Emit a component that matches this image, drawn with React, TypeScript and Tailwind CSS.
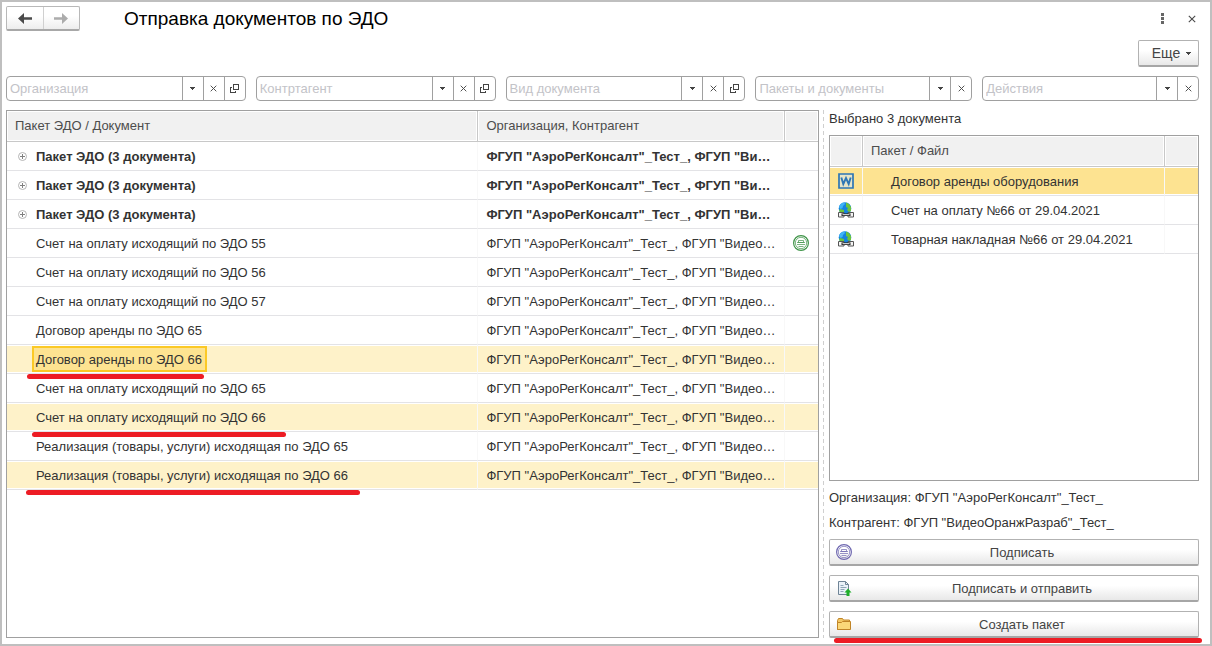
import type { ReactNode } from 'react';

const ORG = 'ФГУП "АэроРегКонсалт"_Тест_';
const PARTNER = 'ФГУП "ВидеоОранжРазраб"_Тест_';

type Row = {
  title: string;
  group?: boolean;
  signed?: boolean;
  selected?: boolean;
  current?: boolean;
  mark?: string;
};

const rows: Row[] = [
  { title: 'Пакет ЭДО (3 документа)', group: true },
  { title: 'Пакет ЭДО (3 документа)', group: true },
  { title: 'Пакет ЭДО (3 документа)', group: true },
  { title: 'Счет на оплату исходящий по ЭДО 55', signed: true },
  { title: 'Счет на оплату исходящий по ЭДО 56' },
  { title: 'Счет на оплату исходящий по ЭДО 57' },
  { title: 'Договор аренды по ЭДО 65' },
  { title: 'Договор аренды по ЭДО 66', selected: true, current: true, mark: 'left-5 w-[177px]' },
  { title: 'Счет на оплату исходящий по ЭДО 65' },
  { title: 'Счет на оплату исходящий по ЭДО 66', selected: true, mark: 'left-[25px] w-[254px]' },
  { title: 'Реализация (товары, услуги) исходящая по ЭДО 65' },
  { title: 'Реализация (товары, услуги) исходящая по ЭДО 66', selected: true, mark: 'left-[19px] w-[334px]' },
];

const filters = [
  { label: 'Организация', open: true },
  { label: 'Контртагент', open: true },
  { label: 'Вид документа', open: true },
  { label: 'Пакеты и документы', open: false },
  { label: 'Действия', open: false },
];

const files = [
  { name: 'Договор аренды оборудования', word: true },
  { name: 'Счет на оплату №66 от 29.04.2021', word: false },
  { name: 'Товарная накладная №66 от 29.04.2021', word: false },
];

function Caret() {
  return (
    <svg width="5" height="3" viewBox="0 0 5 3" fill="#444" shapeRendering="crispEdges">
      <path d="M0 0h5v1H4v1H3v1H2V2H1V1H0z" />
    </svg>
  );
}

function Cross({ size }: { size: number }) {
  return (
    <svg width={size} height={size} viewBox="0 0 8 8" stroke="#4a4a4a" strokeWidth="1.1">
      <path d="M.8.8l6.400 6.400M7.200.8L.8 7.200" />
    </svg>
  );
}

function OpenIcon() {
  return (
    <svg width="9" height="9" viewBox="0 0 9 9" fill="none" stroke="#444" shapeRendering="crispEdges">
      <path d="M3.5 .5h5v5h-5z" />
      <path d="M2 3.5H.5v5h5V7" />
    </svg>
  );
}

function Arrow({ color, flip }: { color: string; flip?: boolean }) {
  return (
    <svg width="14" height="11" viewBox="0 0 14 11" fill={color} className={flip ? 'rotate-180' : ''}>
      <path d="M0 5.500L6 0v4.200h8v2.600H6V11z" />
    </svg>
  );
}

function Seal({ color }: { color: string }) {
  return (
    <svg width="16" height="16" viewBox="0 0 16 16" fill="none" stroke={color}>
      <circle cx="8" cy="8" r="7.400" strokeWidth="1.200" />
      <circle cx="8" cy="8" r="5.700" strokeWidth=".7" />
      <path d="M5.500 5.500h5v2h-5zM4 7.500h8M4 9.500h8M5.500 11.500h5" strokeWidth=".7" />
    </svg>
  );
}

function PlusIcon() {
  return (
    <svg width="9" height="9" viewBox="0 0 9 9" fill="none">
      <circle cx="4.500" cy="4.500" r="4" stroke="#b4b4b4" />
      <path d="M2 4.500h5M4.500 2v5" stroke="#808080" />
    </svg>
  );
}

function WordIcon() {
  return (
    <svg width="16" height="16" viewBox="0 0 16 16" fill="none" stroke="#2d76b5">
      <path d="M1 1h14v14H1z" fill="#e6e4c8" strokeWidth="1.700" />
      <path d="M3.300 4.500l2 6.500L8 5l2.700 6 2-6.500" strokeWidth="1.900" />
    </svg>
  );
}

function WebLinkIcon() {
  return (
    <svg width="16" height="16" viewBox="0 0 16 16" fill="none">
      <circle cx="7" cy="6.500" r="6.300" fill="#1583e0" />
      <path d="M1 5C2 2 4 .4 6.500.4L7 2 5 4 4.500 6 2.500 7z" fill="#3fb4f5" />
      <path d="M8 .4l3 1.600 2 3v4l-2 1-2-2 1-2-2-1zM2 7l4 1v3H3L1 9z" fill="#6cc43c" />
      <path d="M.5 10.500h5.500v4.500H.5zM10 10.500h5.500V15H10z" fill="#f4f4f4" stroke="#555" />
      <path d="M3.500 12.700h9" stroke="#222" strokeWidth="2.600" />
      <path d="M4.500 12.700h7" stroke="#f4f4f4" />
    </svg>
  );
}

function SendIcon() {
  return (
    <svg width="16" height="16" viewBox="0 0 16 16" fill="none">
      <path d="M2.500 1.500h7l3 3v10h-10z" fill="#eaf1f8" stroke="#6f8496" />
      <path d="M9.500 1.500v3h3" stroke="#6f8496" />
      <path d="M4.500 5.500h3M4.500 7.500h6M4.500 9.500h4M4.500 11.500h3" stroke="#8fa5b8" />
      <path d="M12 8.500l3.500 4h-2V16h-3v-3.500h-2z" fill="#1fae2a" />
    </svg>
  );
}

function FolderIcon() {
  return (
    <svg width="16" height="16" viewBox="0 0 16 16" fill="none">
      <path d="M1.500 13.500V4.500l1-2h4l1 1.500h6v9.500z" fill="#f3c763" stroke="#c08427" />
      <path d="M1.500 13.500v-7h4l1-1h8v8z" fill="#fbd878" stroke="#c08427" />
    </svg>
  );
}

function Filter({ label, open }: { label: string; open: boolean }) {
  const part = 'w-[21px] shrink-0 border-l border-[#a0a0a0] flex items-center justify-center';
  return (
    <div className="flex h-[25px] min-w-0 rounded border border-[#a0a0a0] bg-white">
      <input
        aria-label={label}
        placeholder={label}
        className="min-w-0 flex-1 px-[3px] outline-none placeholder:text-[#c3c3c8]"
      />
      <button aria-label="Выбрать" className={part}><Caret /></button>
      <button aria-label="Очистить" className={part}><Cross size={7} /></button>
      {open && <button aria-label="Открыть" className={part}><OpenIcon /></button>}
    </div>
  );
}

function HeadCell({ children }: { children?: ReactNode }) {
  return (
    <th className="h-[31px] border-b border-l border-[#c8c8c8] p-px text-left font-normal first:border-l-0">
      <div className="flex h-7 items-center bg-[#f1f1f1] px-[7px] text-[#4d4d4d]">{children}</div>
    </th>
  );
}

function ActionButton({ icon, children }: { icon: ReactNode; children: ReactNode }) {
  return (
    <button className="flex h-[27px] w-full items-center rounded-xs border border-b-2 border-[#b2b2b2] border-b-[#a6a6a6] bg-linear-to-b from-white from-40% to-[#e8e8e8] px-1.5 text-[#444]">
      {icon}
      <span className="flex-1 pt-px text-center">{children}</span>
    </button>
  );
}

function Mark({ place }: { place: string }) {
  return <div className={`absolute z-10 h-[5px] rounded-full bg-[#ed1c24] ${place}`} />;
}

export default function App() {
  const cell = 'h-[29px] border-b border-l border-b-[#e3e3e6] border-l-[#f8f8f8] py-px pl-0 first:border-l-0';

  return (
    <div className="flex min-h-screen flex-col border-2 border-[#bfbfbf] bg-white px-1 pt-1 pr-[11px] pb-1.5 font-['Liberation_Sans',Arial,sans-serif] text-[13px] leading-4 text-[#333]">
      <header className="flex h-[25px] items-center">
        <div className="flex h-[25px] w-[74px] rounded-xs border border-b-2 border-[#b8b8b8] border-b-[#a8a8a8] bg-linear-to-b from-white from-40% to-[#ededed]">
          <button aria-label="Назад" className="flex flex-1 items-center justify-center"><Arrow color="#4a4a4a" /></button>
          <button aria-label="Вперед" className="flex flex-1 items-center justify-center border-l border-[#d0d0d0]"><Arrow color="#acacac" flip /></button>
        </div>
        <h1 className="ml-11 flex-1 text-[19px] leading-5 text-black">Отправка документов по ЭДО</h1>
        <button aria-label="Меню" className="mr-6">
          <svg width="3" height="11" viewBox="0 0 3 11" fill="#666">
            <path d="M0 0h3v3H0zM0 4h3v3H0zM0 8h3v3H0z" />
          </svg>
        </button>
        <button aria-label="Закрыть" className="mr-[3px]"><Cross size={8} /></button>
      </header>

      <div className="mt-[9px] flex justify-end">
        <button className="flex h-[27px] w-[61px] items-center justify-center gap-1.5 rounded-xs border border-b-2 border-[#b2b2b2] border-b-[#a6a6a6] bg-linear-to-b from-white from-40% to-[#e8e8e8] pl-1.5 text-sm text-[#444]">
          Еще <Caret />
        </button>
      </div>

      <div className="mt-[9px] grid grid-cols-[240fr_240fr_240fr_217fr_217fr] gap-2.5">
        {filters.map((f) => <Filter key={f.label} {...f} />)}
      </div>

      <main className="mt-[9px] flex flex-1">
        <section className="min-w-0 flex-1 border border-[#a0a0a0]">
          <table className="w-full table-fixed border-separate border-spacing-0">
            <colgroup>
              <col className="w-[58%]" />
              <col />
              <col className="w-[34px]" />
            </colgroup>
            <thead>
              <tr>
                <HeadCell>Пакет ЭДО / Документ</HeadCell>
                <HeadCell>Организация, Контрагент</HeadCell>
                <HeadCell />
              </tr>
            </thead>
            <tbody>
              {rows.map((row, i) => {
                const fill = row.selected ? 'bg-[#fef2c9]' : '';
                return (
                  <tr key={i} className={row.group ? 'font-bold' : ''}>
                    <td className={`${cell} relative`}>
                      <div className={`flex h-[26px] items-center ${fill}`}>
                        <span className="flex w-[25px] shrink-0 pl-[11px]">{row.group && <PlusIcon />}</span>
                        <span
                          className={
                            row.current
                              ? 'h-full border-2 border-[#fbc926] bg-[#fde391] pr-[3px] pl-0.5 leading-6 whitespace-nowrap'
                              : 'truncate pt-0.5 pl-1'
                          }
                        >
                          {row.title}
                        </span>
                      </div>
                      {row.mark && <Mark place={`top-[29px] ${row.mark}`} />}
                    </td>
                    <td className={cell}>
                      <div className={`h-[26px] truncate px-2 leading-7 ${fill}`}>{ORG}, {PARTNER}</div>
                    </td>
                    <td className={cell}>
                      <div className={`flex h-[26px] items-center pl-2 ${fill}`}>
                        {row.signed && <Seal color="#3f9448" />}
                      </div>
                    </td>
                  </tr>
                );
              })}
            </tbody>
          </table>
        </section>

        <div className="mx-1 w-px bg-[repeating-linear-gradient(to_bottom,#cfcfcf_0_4px,transparent_4px_7px)]" />

        <aside className="flex w-[371px] shrink-0 flex-col pl-px">
          <p className="pt-px">Выбрано 3 документа</p>
          <div className="mt-2 min-h-[345px] flex-1 border border-[#a0a0a0]">
            <table className="w-full table-fixed border-separate border-spacing-0">
              <colgroup>
                <col className="w-8" />
                <col />
                <col className="w-[34px]" />
              </colgroup>
              <thead>
                <tr>
                  <HeadCell />
                  <HeadCell>Пакет / Файл</HeadCell>
                  <HeadCell />
                </tr>
              </thead>
              <tbody>
                {files.map((file) => {
                  const fill = file.word ? 'bg-[#fde391]' : '';
                  return (
                    <tr key={file.name}>
                      <td className={cell}>
                        <div className={`flex h-[26px] items-center justify-center ${fill}`}>
                          {file.word ? <WordIcon /> : <WebLinkIcon />}
                        </div>
                      </td>
                      <td className={cell}>
                        <div className={`h-[26px] truncate pl-7 leading-7 ${fill}`}>{file.name}</div>
                      </td>
                      <td className={cell}>
                        <div className={`h-[26px] ${fill}`} />
                      </td>
                    </tr>
                  );
                })}
              </tbody>
            </table>
          </div>
          <p className="mt-[9px]">Организация: {ORG}</p>
          <p className="mt-[9px]">Контрагент: {PARTNER}</p>
          <div className="relative mt-2 flex flex-col gap-[9px]">
            <ActionButton icon={<Seal color="#6f68b0" />}>Подписать</ActionButton>
            <ActionButton icon={<SendIcon />}>Подписать и отправить</ActionButton>
            <ActionButton icon={<FolderIcon />}>Создать пакет</ActionButton>
            <Mark place="top-full -right-[3px] left-[5px]" />
          </div>
        </aside>
      </main>
    </div>
  );
}
